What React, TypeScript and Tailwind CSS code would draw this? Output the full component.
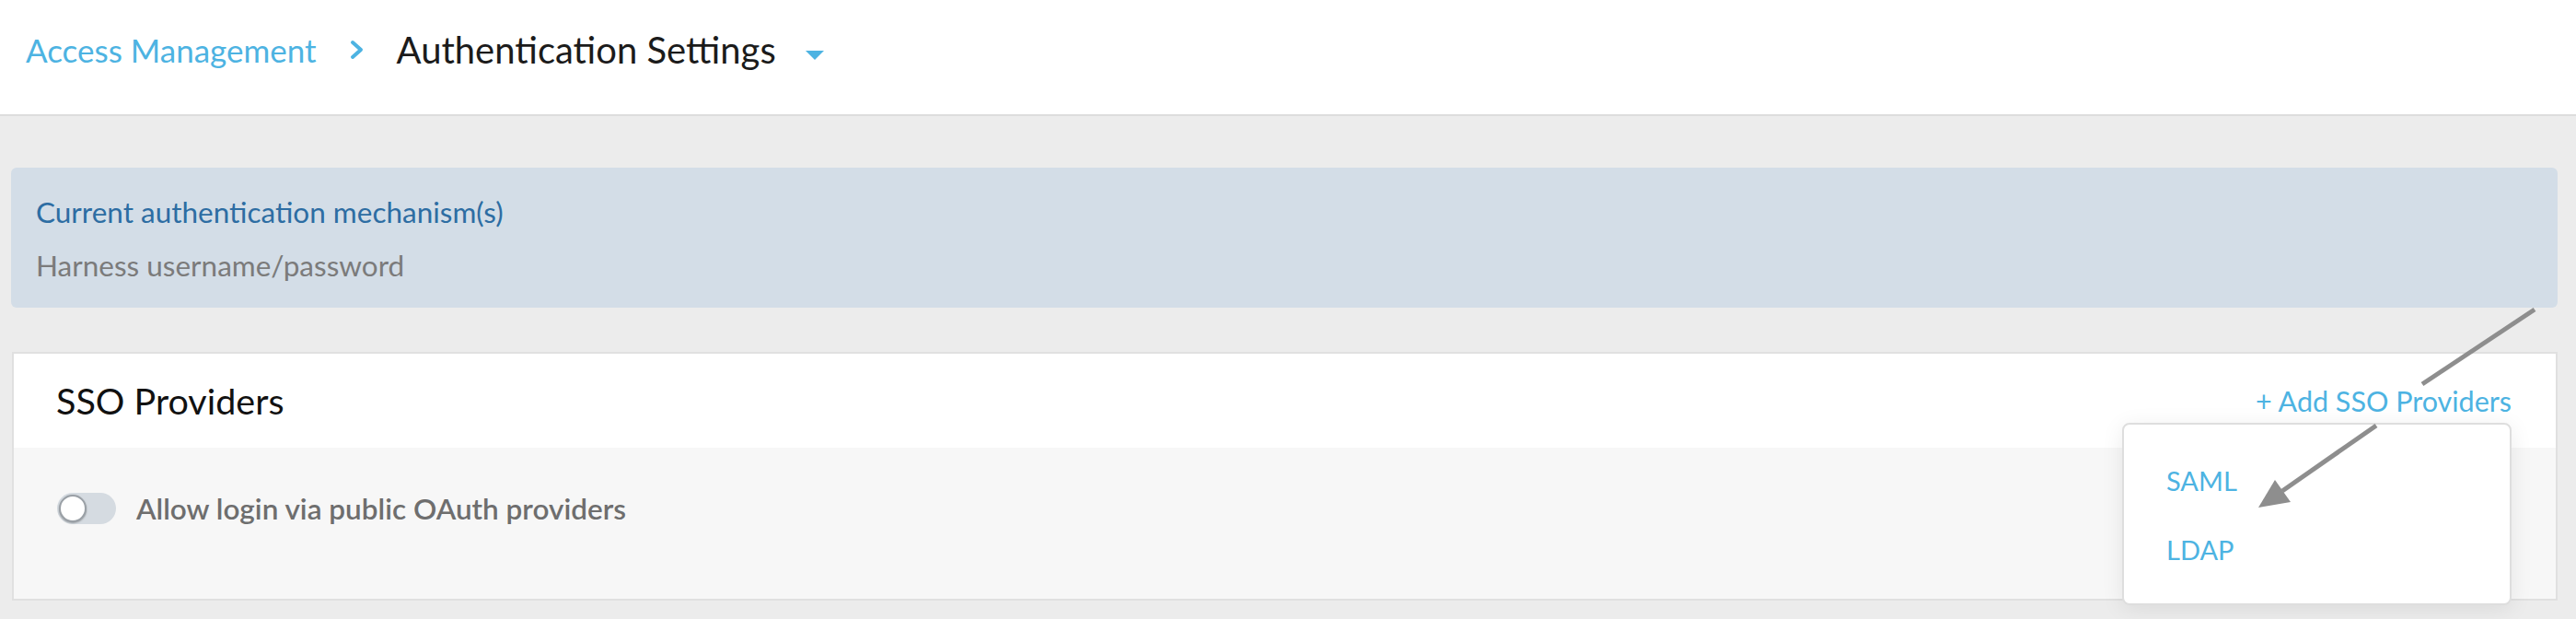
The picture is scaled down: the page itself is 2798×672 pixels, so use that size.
import React from "react";

export default function App() {
  return (
    <div className="relative w-[2798px] h-[672px] overflow-hidden bg-[#ececec] font-['Lato',sans-serif]">
      <header className="h-[126px] bg-white border-b-2 border-[#dddddd] flex items-center pl-[28px] pb-[16px]">
        <span className="text-[35px] text-[#4db3e2] leading-[44px]">Access Management</span>
        <svg width="16" height="22" viewBox="0 0 16 22" className="ml-[36px] mr-[35px]">
          <polyline points="3,3 12,11 3,19" fill="none" stroke="#4db3e2" strokeWidth="4" strokeLinecap="round" strokeLinejoin="round" />
        </svg>
        <span className="text-[40px] text-[#1b1b1b] leading-[44px]">Authentication Settings</span>
        <svg width="20" height="10" viewBox="0 0 20 10" className="ml-[32px] mt-[12px]">
          <polygon points="0,0 20,0 10,10" fill="#4db3e2" />
        </svg>
      </header>

      <main className="pt-[56px] pl-[12px] pr-[20px] pb-[20px]">
        <div className="h-[152px] rounded-[6px] bg-[#d3dde7] pl-[27px] pt-[28px] flex flex-col gap-[18px]">
          <div className="text-[31.5px] leading-[40px] text-[#2d6da3]">Current authentication mechanism(s)</div>
          <div className="text-[31.5px] leading-[40px] text-[#7b7b7b]">Harness username/password</div>
        </div>

        <div className="relative mt-[48px] ml-[1px] border-2 border-[#e0e0e0] bg-white">
          <div className="h-[102px] flex items-center justify-between pl-[46px] pr-[48px]">
            <span className="text-[39.5px] leading-[44px] text-[#111111]">SSO Providers</span>
            <span className="text-[30.5px] leading-[40px] text-[#4db3e2]">+ Add SSO Providers</span>
          </div>
          <div className="h-[164px] bg-[#f7f7f7] flex items-start pl-[47px] pt-[49px]">
            <div className="relative w-[64px] h-[34px] rounded-full bg-[#d5dbe1] shrink-0">
              <div className="absolute left-[2px] top-[2px] w-[30px] h-[30px] rounded-full bg-white border-2 border-[#9aa0a6] shadow-[0_1px_2px_rgba(0,0,0,0.3)]" />
            </div>
            <span className="ml-[22px] text-[31.5px] leading-[34px] font-semibold text-[#6e6e6e]">
              Allow login via public OAuth providers
            </span>
          </div>

          <div className="absolute right-[48px] top-[75px] w-[423px] h-[198px] rounded-[8px] border-2 border-[#dedede] bg-white shadow-[0_4px_24px_rgba(0,0,0,0.08)] pl-[46px] pt-[41px] flex flex-col gap-[35px]">
            <span className="text-[29px] leading-[40px] text-[#4db3e2]">SAML</span>
            <span className="text-[29px] leading-[40px] text-[#4db3e2]">LDAP</span>
          </div>
        </div>
      </main>

      <svg className="absolute inset-0 pointer-events-none" width="2798" height="672" viewBox="0 0 2798 672">
        <line x1="2753" y1="336" x2="2631" y2="417" stroke="#8e8e8e" strokeWidth="5" />
        <line x1="2581" y1="462" x2="2479" y2="533" stroke="#8e8e8e" strokeWidth="5" />
        <polygon points="2453,551 2471,521 2488,545" fill="#8e8e8e" />
      </svg>
    </div>
  );
}
